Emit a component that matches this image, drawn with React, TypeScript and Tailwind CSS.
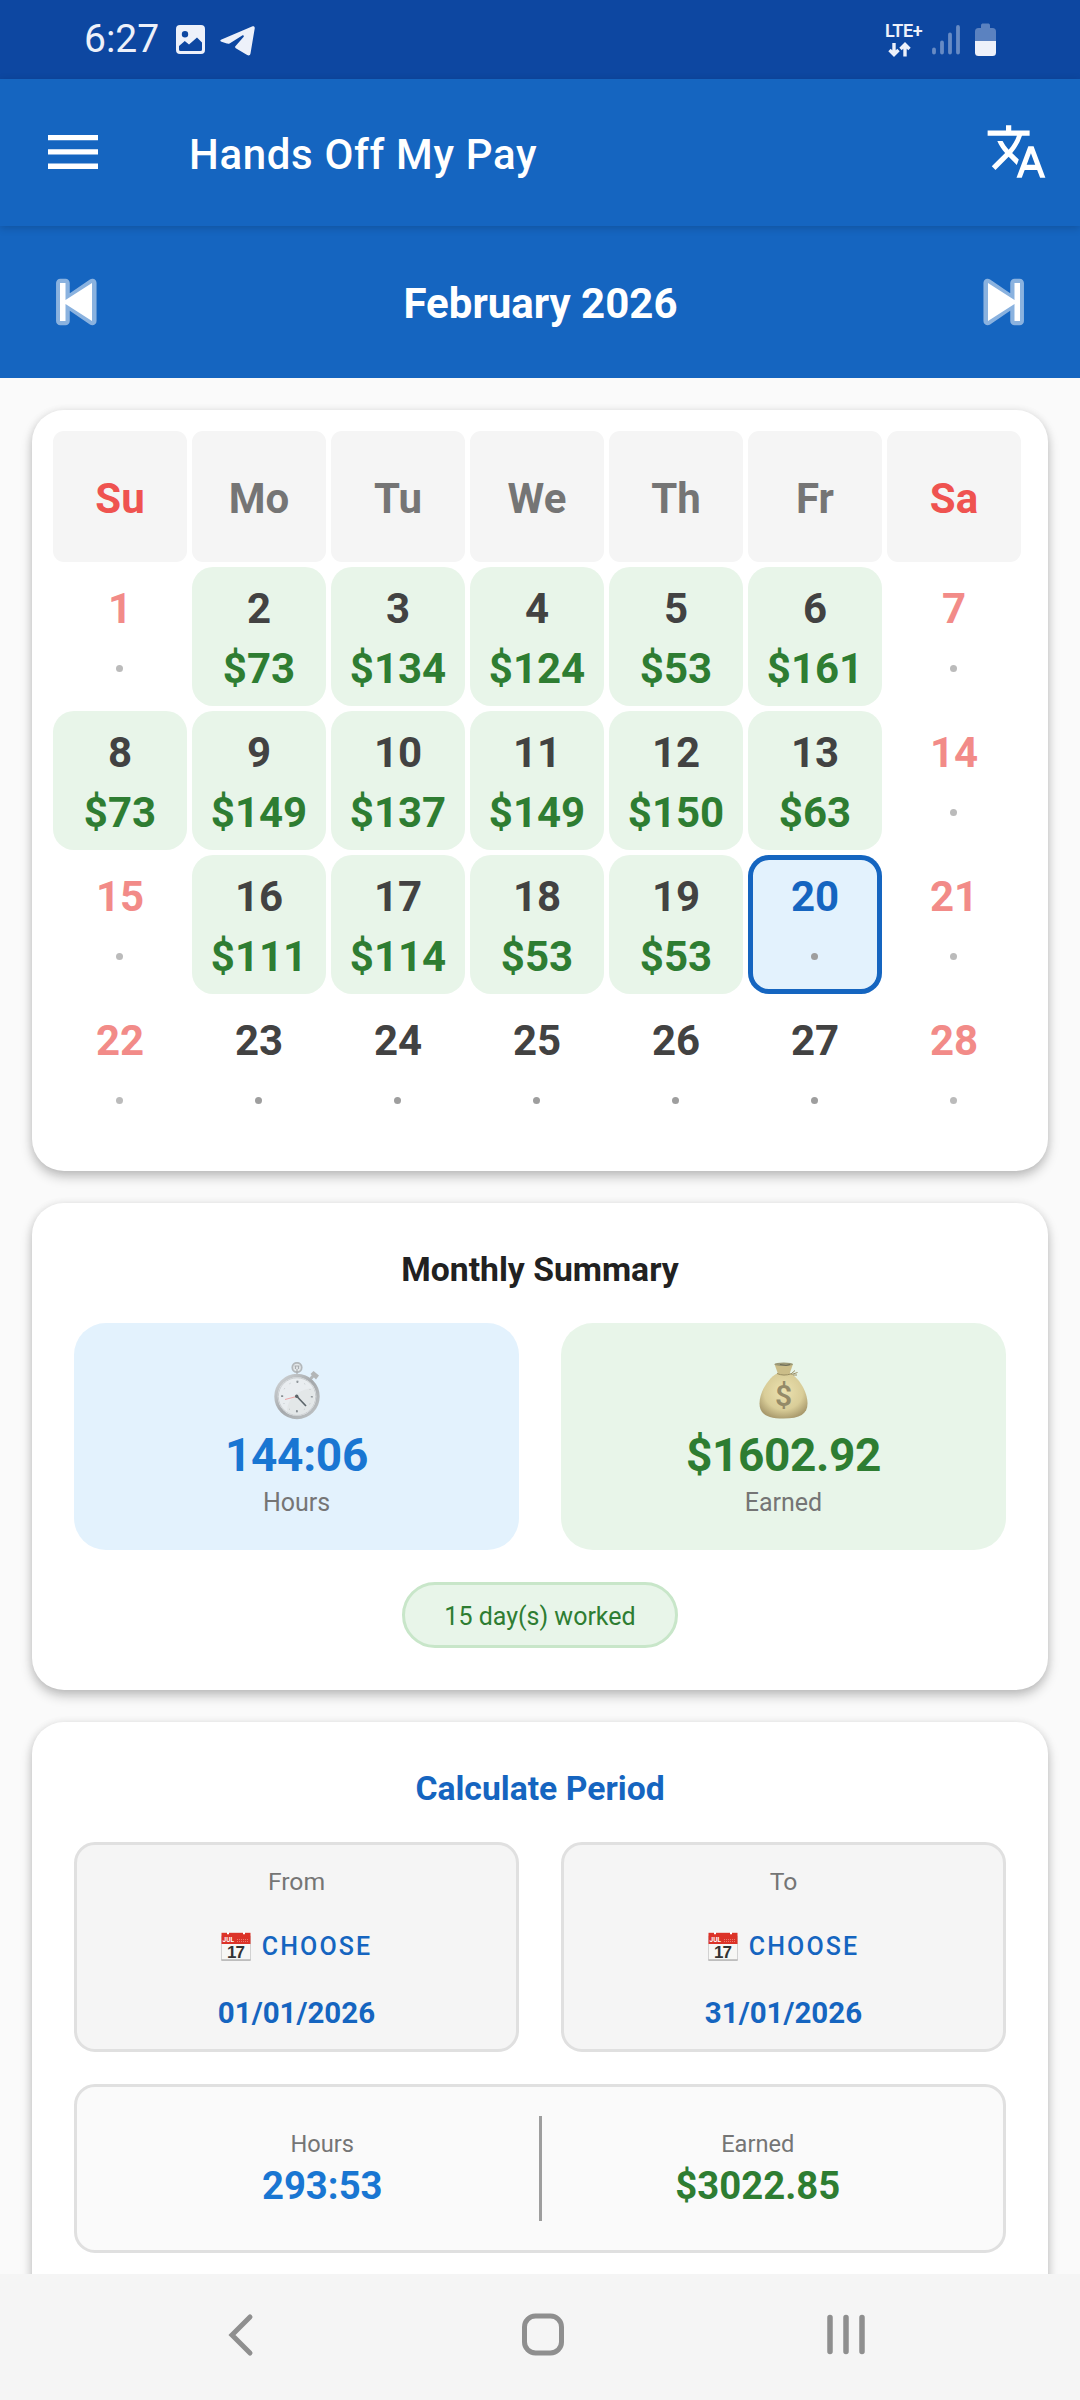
import React from "react";

const days = ["Su", "Mo", "Tu", "We", "Th", "Fr", "Sa"];

const earned: Record<number, string> = {
  2: "$73", 3: "$134", 4: "$124", 5: "$53", 6: "$161",
  8: "$73", 9: "$149", 10: "$137", 11: "$149", 12: "$150", 13: "$63",
  16: "$111", 17: "$114", 18: "$53", 19: "$53",
};

function StatusBar() {
  return (
    <div className="flex h-[79px] items-start justify-between bg-[#0D47A1] pl-[84px] pr-[84px] text-[#EDF1FA]">
      <div className="flex items-start">
        <span className="mt-4 w-[76px] whitespace-nowrap text-[39px] leading-[46px]">6:27</span>
        <svg className="ml-4 mt-[25px]" width="29" height="29" viewBox="0 0 29 29">
          <path fillRule="evenodd" fill="currentColor" d="M4 0h21a4 4 0 0 1 4 4v21a4 4 0 0 1-4 4H4a4 4 0 0 1-4-4V4a4 4 0 0 1 4-4ZM3 21v3.500a1.500 1.500 0 0 0 1.500 1.500h20a1.500 1.500 0 0 0 1.500-1.500v-7L21 12.500l-8 7L8.800 16ZM9 6a3.200 3.200 0 1 0 0 6.400A3.200 3.200 0 0 0 9 6Z" />
        </svg>
        <svg className="ml-[15px] mt-[26px]" width="35" height="30" viewBox="0 0 35 30">
          <path fill="currentColor" d="M1.500 13.600 32 .6c1.800-.7 3 .2 2.700 2L30.500 27.500c-.3 1.800-1.700 2.500-3.300 1.500L15.800 22.200c-1-.7-1-1.400-.2-2.200L23.500 11c.8-1 0-2.200-1.300-1.400L10 17.200c-1 .6-2 .7-3.200.4l-5.300-1.800c-1.600-.6-1.600-1.600 0-2.200Z" />
        </svg>
      </div>
      <div className="flex items-start">
        <div className="flex w-[38px] flex-col">
          <span className="mt-[21px] whitespace-nowrap text-[18px] font-semibold leading-5 tracking-[-0.4px]">LTE+</span>
          <svg className="ml-[3px] mt-px" width="24" height="15" viewBox="0 0 24 15">
            <path d="M6 1v11M1.500 8 6 12.500 10.500 8M17 14.500V3M12.500 7 17 2.500 21.500 7" fill="none" stroke="currentColor" strokeWidth="3.400" />
          </svg>
        </div>
        <svg className="ml-[9px] mt-[25px] opacity-40" width="28" height="30" viewBox="0 0 28 30">
          <path d="M2 24.500v3M10 17.500v10M18 9.500v18M26 2v25.500" stroke="currentColor" strokeWidth="3.800" strokeLinecap="round" />
        </svg>
        <svg className="ml-[15px] mt-[23px]" width="21" height="34" viewBox="0 0 21 34">
          <path d="M6 5V2.500C6 1 7 .5 8 .5h5c1 0 2 .5 2 2V5h2.500A3.500 3.500 0 0 1 21 8.500V18H0V8.500A3.500 3.500 0 0 1 3.500 5Z" fill="currentColor" opacity=".35" />
          <path d="M0 18h21v11.500a3.500 3.500 0 0 1-3.500 3.500h-14A3.500 3.500 0 0 1 0 29.500Z" fill="currentColor" />
        </svg>
      </div>
    </div>
  );
}

function SkipIcon({ flip }: { flip?: boolean }) {
  return (
    <svg className={flip ? "-scale-x-100" : ""} width="41" height="48" viewBox="0 0 41 48">
      <g opacity=".5" fill="#fff" stroke="#fff" strokeWidth="8.500" strokeLinejoin="round">
        <path d="M4.300 5h5.200v38H4.300ZM36.300 5v38L10 25v-2Z" />
      </g>
      <path d="M4 5h5.500v17L36 5v38L9.500 26v17H4Z" fill="#fff" />
    </svg>
  );
}

function Stopwatch() {
  return (
    <svg width="46" height="58" viewBox="0 0 46 58">
      <defs>
        <linearGradient id="rim" x1="0" y1="0" x2="1" y2="1">
          <stop offset="0" stopColor="#d3d6d8" />
          <stop offset=".5" stopColor="#a4a8ab" />
          <stop offset="1" stopColor="#c0c4c6" />
        </linearGradient>
      </defs>
      <circle cx="23" cy="5.500" r="4.700" fill="#e4e8ea" stroke="#b3b8bb" strokeWidth="1.800" />
      <path d="M20.500 4h5M21.500 4v3M24.500 4v3M23 7v5" stroke="#a9adb0" strokeWidth="1.200" />
      <path d="m36.500 17 3-3.500" stroke="#b4b8ba" strokeWidth="3" />
      <path d="m36.500 12 3-3 5.500 4.500-3 4Z" fill="#b3b6b7" />
      <circle cx="23" cy="34.500" r="21" fill="#eceff1" stroke="url(#rim)" strokeWidth="3.400" />
      <circle cx="23" cy="34.500" r="18.700" fill="#e9edf0" stroke="#c0c4c7" strokeWidth=".8" />
      <path d="M13 50c0-13 10-22 26-24 5 12-2 27-16 27-4 0-7-1-10-3Z" fill="#e0e4e6" opacity=".75" />
      <circle cx="23" cy="34.500" r="14.800" fill="none" stroke="#70777b" strokeWidth="1.900" strokeDasharray="1.800 21.450" strokeDashoffset=".9" />
      <circle cx="23" cy="34.500" r="14.800" fill="none" stroke="#b4babd" strokeWidth="1" strokeDasharray=".8 6.950" strokeDashoffset=".4" />
      <path d="m22.500 34.500-11.500 3" stroke="#ec9c9d" strokeWidth=".9" />
      <path d="m22.500 34 9.500 10" stroke="#5c656a" strokeWidth="1.700" />
      <circle cx="22.700" cy="34.300" r="1.700" fill="#5c656a" />
    </svg>
  );
}

function MoneyBag() {
  return (
    <svg width="49" height="57" viewBox="0 0 49 57">
      <defs>
        <radialGradient id="bag" cx=".5" cy=".4" r=".62">
          <stop offset="0" stopColor="#ece2b0" />
          <stop offset=".65" stopColor="#d9cd98" />
          <stop offset="1" stopColor="#a99a6d" />
        </radialGradient>
      </defs>
      <path d="M18 11.500c-8 4-17.500 18-17.500 30C.5 52 8 56.500 24.500 56.500S48.500 52 48.500 41.500c0-12-9-26-17-30Z" fill="url(#bag)" />
      <path d="M15.500 2 19 12c3 1.500 8 1.500 11.500 0L34 2Z" fill="#cbbd88" />
      <ellipse cx="24.700" cy="2.200" rx="9.300" ry="1.800" fill="#9b9877" />
      <path d="m21 2.500 6 1 4-1" stroke="#6f6d58" strokeWidth="1.200" fill="none" />
      <path d="M18 11.500c4 2 10 2 14 .3M32 12l4-3.500M32.500 12.500l6-2M34 13h4" stroke="#9a8e63" strokeWidth="1" fill="none" />
      <text x="24.500" y="44" textAnchor="middle" fontFamily="Roboto" fontSize="30" fontWeight="600" fill="#958b68">$</text>
    </svg>
  );
}

function CalendarIcon() {
  return (
    <svg width="30" height="29" viewBox="0 0 30 29">
      <path d="M.5 4h29v24.300H.5Z" fill="#f7f7f5" stroke="#c9c9c9" strokeWidth=".8" />
      <path d="M.5 .8h29v11.200H.5Z" fill="#dc3328" />
      <path d="M6 0h2v2.200H6ZM22 0h2v2.200h-2Z" fill="#fff" />
      <path d="M16 7.500h12M16 9.500h12" stroke="#ee8a80" strokeWidth=".8" strokeDasharray="1 1" />
      <text x="1.500" y="9.700" fontFamily="Roboto" fontSize="6.500" fontWeight="700" fill="#fff">JUL</text>
      <text x="14.500" y="26" textAnchor="middle" fontFamily="Liberation Sans" fontSize="17" fontWeight="700" letterSpacing="-1" fill="#333">17</text>
      <path d="M.5 28h29" stroke="#aaa" strokeWidth="1.200" />
    </svg>
  );
}

function Day({ n }: { n: number }) {
  const weekend = n % 7 < 2;
  const pay = earned[n];
  const today = n === 20;
  const box = today
    ? "bg-[#E3F2FD] shadow-[inset_0_0_0_5px_#1565C0]"
    : pay
      ? "bg-[#E8F5E9]"
      : "";
  const color = today ? "text-[#1565C0]" : weekend && !pay ? "text-[#F28B88]" : "text-[#424242]";
  return (
    <div className={`flex h-[139px] flex-col items-center rounded-[21px] pt-3 font-bold ${box}`}>
      <span className={`text-[42px] leading-[60px] ${color}`}>{n}</span>
      {pay ? (
        <span className="text-[42px] leading-[60px] text-[#2E7D32]">{pay}</span>
      ) : (
        <span className={`mr-0.5 mt-[26px] size-[7px] rounded-full ${weekend ? "bg-[#BBBBBB]" : "bg-[#9E9E9E]"}`} />
      )}
    </div>
  );
}

function DateBox({ label, date }: { label: string; date: string }) {
  return (
    <div className="flex h-[210px] flex-1 flex-col items-center rounded-[21px] border-[3px] border-[#E0E0E0] bg-[#F5F5F5] pt-[21px]">
      <span className="text-[24.700px] leading-8 text-[#757575]">{label}</span>
      <div className="mt-8 flex items-center text-[#1565C0]">
        <CalendarIcon />
        <span className="ml-[11px] pt-px text-[25px] font-medium leading-8 tracking-[2.100px]">CHOOSE</span>
      </div>
      <span className="mt-8 text-[29.500px] font-bold leading-9 text-[#1565C0]">{date}</span>
    </div>
  );
}

const cardShadow = "shadow-[0_6px_12px_rgba(0,0,0,0.22),0_1px_8px_rgba(0,0,0,0.09)]";

export default function App() {
  return (
    <div className="flex h-[2400px] w-[1080px] flex-col overflow-hidden bg-[#FAFAFA] font-[Roboto,sans-serif]">
      <StatusBar />
      <header className="z-10 flex h-[147px] shrink-0 items-center bg-[#1565C0] pl-12 pr-8 text-white shadow-[0_2px_8px_rgba(0,0,0,0.18)]">
        <svg className="-mt-px" width="50" height="34" viewBox="0 0 50 34" fill="#fff">
          <path d="M0 0h50v5.300H0ZM0 14.300h50v5.300H0ZM0 28.600h50v5.300H0Z" />
        </svg>
        <h1 className="ml-[91px] mt-[3px] flex-1 text-[42px] font-medium tracking-[0.650px]">Hands Off My Pay</h1>
        <svg className="-mt-0.5" width="63" height="63" viewBox="0 0 24 24" fill="#fff">
          <path d="M12.870 15.070l-2.540-2.510.03-.03A17.520 17.520 0 0 0 14.070 6H17V4h-7V2H8v2H1v1.990h11.170C11.500 7.920 10.440 9.750 9 11.350 8.070 10.320 7.300 9.190 6.690 8h-2c.73 1.630 1.730 3.170 2.980 4.560l-5.090 5.020L4 19l5-5 3.110 3.110.76-2.040zM18.500 10h-2L12 22h2l1.120-3h4.750L21 22h2l-4.500-12zm-2.620 7 1.620-4.330L19.120 17h-3.240z" />
        </svg>
      </header>
      <div className="flex h-[152px] shrink-0 items-center justify-between bg-[#1565C0] px-14 text-white">
        <SkipIcon />
        <h2 className="ml-px mt-[3px] text-[42px] font-bold">February 2026</h2>
        <SkipIcon flip />
      </div>

      <main className="flex flex-1 flex-col gap-8 overflow-hidden px-8 pt-8">
        <section className={`h-[761px] shrink-0 rounded-[32px] bg-white pl-[21px] pr-[27px] pt-[21px] ${cardShadow}`}>
          <div className="grid grid-cols-7 gap-[5px]">
            {days.map((d) => (
              <div
                key={d}
                className={`flex h-[131px] items-center justify-center rounded-[11px] bg-[#F5F5F5] pt-1 text-[42px] font-bold ${d[0] === "S" ? "text-[#EF5350]" : "text-[#757575]"}`}
              >
                {d}
              </div>
            ))}
            {Array.from({ length: 28 }, (_, i) => (
              <Day key={i} n={i + 1} />
            ))}
          </div>
        </section>

        <section className={`flex h-[487px] shrink-0 flex-col items-center rounded-[32px] bg-white px-[42px] pt-[47px] ${cardShadow}`}>
          <h3 className="text-[33.700px] font-bold leading-10 text-[#212121]">Monthly Summary</h3>
          <div className="mt-[33px] flex w-full gap-[42px]">
            <div className="flex h-[227px] flex-1 flex-col items-center rounded-[32px] bg-[#E3F2FD] pt-[39px]">
              <Stopwatch />
              <span className="mt-[7px] text-[46px] font-bold leading-[56px] tracking-[-0.300px] text-[#1976D2]">144:06</span>
              <span className="mt-1 text-[25px] leading-8 text-[#757575]">Hours</span>
            </div>
            <div className="flex h-[227px] flex-1 flex-col items-center rounded-[32px] bg-[#E8F5E9] pt-[39px]">
              <MoneyBag />
              <span className="mt-2 text-[46px] font-bold leading-[56px] tracking-[-0.400px] text-[#2E7D32]">$1602.92</span>
              <span className="mt-1 text-[25px] leading-8 text-[#757575]">Earned</span>
            </div>
          </div>
          <div className="mt-8 flex h-[66px] w-[276px] items-center justify-center whitespace-nowrap rounded-full border-[3px] border-[#C8E6C9] bg-[#E8F5E9] pt-[3px] text-[25px] text-[#2E7D32]">
            15 day(s) worked
          </div>
        </section>

        <section className={`flex h-[600px] shrink-0 flex-col items-center rounded-[32px] bg-white px-[42px] pt-[47px] ${cardShadow}`}>
          <h3 className="text-[33.700px] font-bold leading-10 text-[#1565C0]">Calculate Period</h3>
          <div className="mt-[33px] flex w-full gap-[42px]">
            <DateBox label="From" date="01/01/2026" />
            <DateBox label="To" date="31/01/2026" />
          </div>
          <div className="mt-8 flex h-[169px] w-full items-center rounded-[21px] border-[3px] border-[#E0E0E0] bg-[#FAFAFA] pl-[29px] pr-[29px]">
            <div className="flex flex-1 flex-col items-center pt-0.5">
              <span className="text-[23.600px] leading-7 text-[#757575]">Hours</span>
              <span className="mt-[5px] text-[38.300px] font-bold leading-[46px] text-[#1976D2]">293:53</span>
            </div>
            <div className="h-[105px] w-[3px] bg-[#9E9E9E]" />
            <div className="flex flex-1 flex-col items-center pt-0.5">
              <span className="text-[23.600px] leading-7 text-[#757575]">Earned</span>
              <span className="mt-[5px] text-[38.300px] font-bold leading-[46px] text-[#2E7D32]">$3022.85</span>
            </div>
          </div>
        </section>
      </main>

      <nav className="z-10 flex h-[126px] shrink-0 items-start bg-[#F5F5F5] pl-[228px] pt-[39px] text-[#8F8F8F]">
        <svg width="26" height="44" viewBox="0 0 26 44">
          <path d="M22 4 4 22l18 18" fill="none" stroke="currentColor" strokeWidth="5" strokeLinecap="round" />
        </svg>
        <svg className="ml-[268px]" width="42" height="44" viewBox="0 0 42 44">
          <rect x="2.500" y="3" width="37" height="37" rx="11" fill="none" stroke="currentColor" strokeWidth="5" />
        </svg>
        <svg className="ml-[263px]" width="38" height="44" viewBox="0 0 38 44">
          <path d="M3 4.500v34M19 4.500v34M35 4.500v34" stroke="currentColor" strokeWidth="5.500" strokeLinecap="round" />
        </svg>
      </nav>
    </div>
  );
}
